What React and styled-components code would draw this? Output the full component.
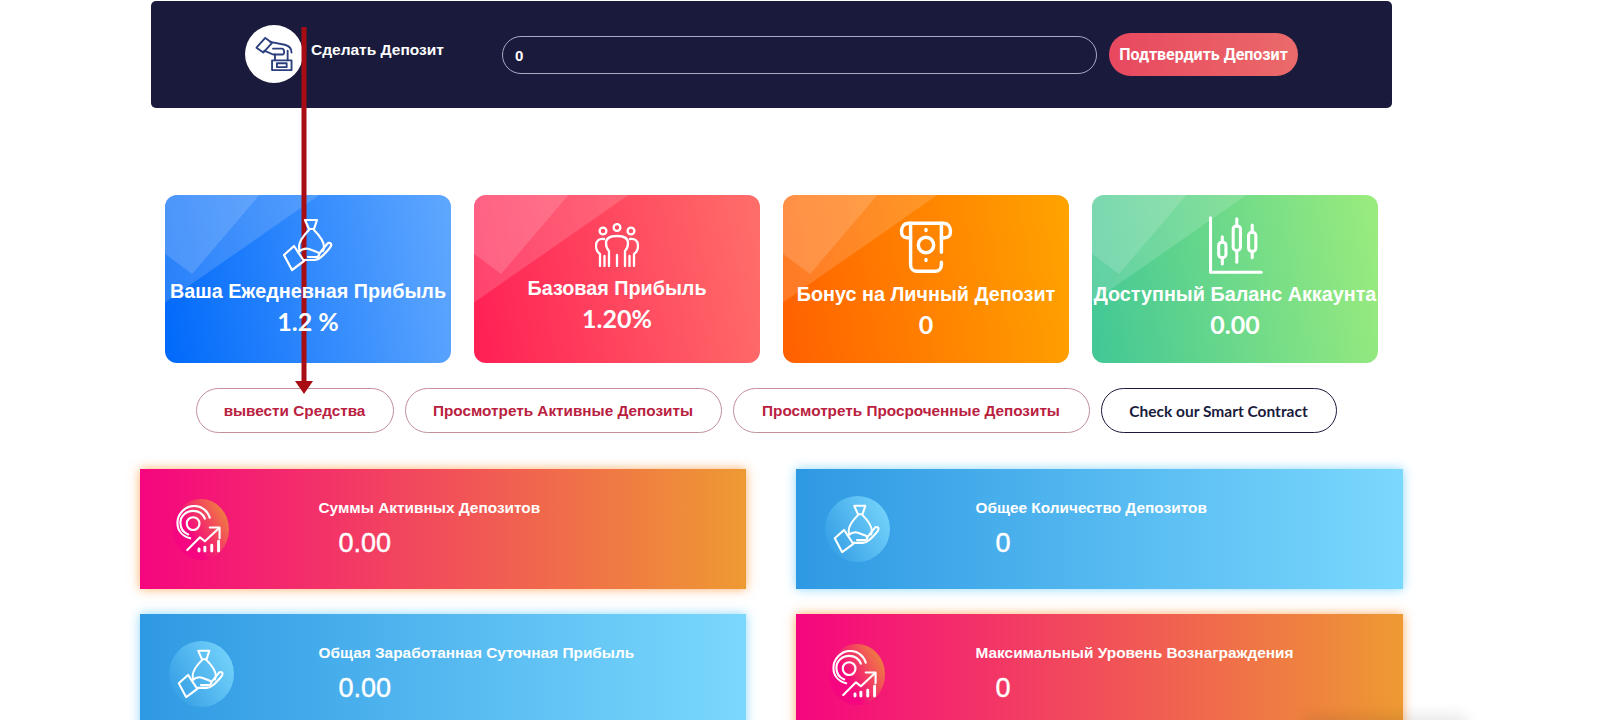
import React from 'react';
import styled, { createGlobalStyle } from 'styled-components';

const GlobalStyle = createGlobalStyle`
    html, body {
        margin: 0;
        padding: 0;
        background: #fff;
        overflow: hidden;
    }
`;

const HandBagIcon = ({ size }) => (
    <svg width={size} height={size} viewBox="-1 -1 52 54" fill="none" stroke="currentColor" strokeWidth="2.2" strokeLinejoin="round" strokeLinecap="round">
        <path d="M22 1h12l-3 9h-5z" />
        <path d="M26 11c-4 4-10 10-10 17 0 2 0 3 1 4M31 11c4 4 10 10 10 17 0 1 0 2-1 4" />
        <path d="M1 36l10-9 10 15-12 9z" />
        <path d="M15 33c4-3 8-4 11-3l8 3c3 1 3 5-1 5h-8" />
        <path d="M36 35l8-10c2-2 5-1 4 2-1 2-7 9-10 11-2 2-4 3-7 3H21" />
    </svg>
);

const PeopleIcon = ({ size }) => (
    <svg width={size} height={size} viewBox="0 0 44 44" fill="none" stroke="currentColor" strokeWidth="2.3" strokeLinecap="round" strokeLinejoin="round">
        <circle cx="8" cy="8" r="3.4" />
        <circle cx="22" cy="4.5" r="3.4" />
        <circle cx="36" cy="8" r="3.4" />
        <path d="M14 43V28c-2-2-3-4-3-8 0-5 5-7 11-7s11 2 11 7c0 4-1 6-3 8v15M22 32v11" />
        <path d="M9 16c-5-1-8 2-8 7 0 4 1 6 4 8v12M9.500 33v10" />
        <path d="M35 16c5-1 8 2 8 7 0 4-1 6-4 8v12M34.500 33v10" />
    </svg>
);

const BillIcon = ({ size }) => (
    <svg width={size} height={size} viewBox="0 0 64 64" fill="none" stroke="currentColor" strokeWidth="3.8" strokeLinecap="round" strokeLinejoin="round">
        <path d="M15 24h-4c-4 0-6-3-6-7s2-9 8-9h38c6 0 8 5 8 9s-2 7-6 7h-4" />
        <path d="M15 8v46c0 4 3 7 7 7h20c4 0 7-3 7-7v-3M49 8v32" />
        <circle cx="32" cy="32" r="8.500" />
        <path d="M32 15v1M32 48v1" />
    </svg>
);

const CandlesIcon = ({ size }) => (
    <svg width={size} height={size} viewBox="0 0 64 64" fill="none" stroke="currentColor" strokeWidth="3.4" strokeLinecap="round" strokeLinejoin="round">
        <path d="M5 2v60h56" />
        <path d="M18 23v6M18 46v7M34 3v8M34 38v13M51 10v8M51 39v7" />
        <rect x="14" y="29" width="8" height="17" rx="3.500" />
        <rect x="30" y="11" width="8" height="27" rx="3.500" />
        <rect x="47" y="18" width="8" height="21" rx="3.500" />
    </svg>
);

const TargetIcon = ({ size }) => (
    <svg width={size} height={size} viewBox="-1 -1 46 49" fill="none" stroke="currentColor" strokeWidth="2.2" strokeLinecap="round" strokeLinejoin="round">
        <path d="M13 33C5 31 0 25 0 17 0 8 8 0 17 0c8 0 14 5 16 12" />
        <path d="M11 29C6 27 3 23 3 17 3 10 9 5 16 5c6 0 10 3 12 8" />
        <circle cx="16" cy="18" r="6.500" />
        <path d="M10 45l13-13 5 4 14-13" />
        <path d="M33 22h10v11" />
        <path d="M22 46v-2M28 46v-4M35 46v-6M42 46v-10" strokeWidth="3" />
    </svg>
);

const DepositIcon = ({ size }) => (
    <svg width={size} height={size} viewBox="-1 -1 38 39" fill="none" stroke="#2b3f7e" strokeWidth="1.9" strokeLinejoin="round" strokeLinecap="round">
        <path d="M0 12l9-10 7 5-9 10z" />
        <path d="M14 6l15 3c4 1 7 4 7 8" />
        <path d="M8 15l9 4h10c2 0 2-6-1-6h-9" />
        <path d="M19 25v-6M32 25V15" />
        <rect x="16" y="25" width="20" height="10" />
        <rect x="21" y="28" width="10" height="4" />
    </svg>
);

const Page = styled.div`
    position: relative;
    box-sizing: border-box;
    width: 1543px;
    height: 720px;
    overflow: hidden;
    padding-top: 1px;
    display: flex;
    flex-direction: column;
    align-items: center;
    font-family: "Liberation Sans", Arial, sans-serif;
`;

const DepositBar = styled.div`
    box-sizing: border-box;
    width: 1241px;
    height: 107px;
    flex: none;
    display: flex;
    align-items: flex-start;
    padding: 24px 94px 0;
    background: #1a1b3c;
    border-radius: 5px;
`;

const DepositCircle = styled.div`
    width: 58px;
    height: 58px;
    flex: none;
    display: flex;
    align-items: center;
    justify-content: center;
    background: #fff;
    border-radius: 50%;
`;

const DepositTitle = styled.div`
    width: 191px;
    flex: none;
    margin: 16px 0 0 8px;
    color: #fff;
    font-size: 15.5px;
    font-weight: 700;
`;

const AmountInput = styled.input`
    box-sizing: border-box;
    width: 595px;
    height: 38px;
    flex: none;
    margin-top: 11px;
    padding: 0 12px;
    background: transparent;
    border: 1px solid #a9a9c4;
    border-radius: 19px;
    color: #fff;
    outline: none;
    font-family: "Liberation Sans", Arial, sans-serif;
    font-size: 15px;
    font-weight: 700;
`;

const ConfirmButton = styled.button`
    width: 189px;
    height: 43px;
    flex: none;
    margin: 8px 0 0 12px;
    padding: 0;
    background: linear-gradient(90deg, #e8485f, #ea6a6a);
    border: none;
    border-radius: 22px;
    color: #fff;
    font-family: Roboto, "Liberation Sans", sans-serif;
    font-size: 16px;
    font-weight: 700;
`;

const CardRow = styled.div`
    display: flex;
    gap: 23px;
    margin-top: 87px;
`;

const Card = styled.div`
    position: relative;
    box-sizing: border-box;
    width: 286px;
    height: 168px;
    overflow: hidden;
    display: flex;
    flex-direction: column;
    align-items: center;
    padding-top: ${(props) => props.$top}px;
    background: linear-gradient(80deg, ${(props) => props.$from}, ${(props) => props.$to});
    border-radius: 12px;
    color: #fff;

    &::before, &::after {
        content: "";
        position: absolute;
        inset: 0;
        background: rgba(255, 255, 255, 0.15);
    }

    &::before {
        clip-path: polygon(0 0, 54% 0, 0 64%);
    }

    &::after {
        clip-path: polygon(0 0, 33% 0, 9.5% 47%, 0 35%);
    }
`;

const CardIcon = styled.div`
    position: relative;
    z-index: 1;
    height: ${(props) => props.$height}px;
    display: flex;
    align-items: center;
    justify-content: center;
`;

const CardTitle = styled.div`
    position: relative;
    z-index: 1;
    margin-top: ${(props) => props.$gap}px;
    white-space: nowrap;
    font-size: 19.8px;
    font-weight: 700;
    line-height: 22px;
`;

const CardValue = styled.div`
    position: relative;
    z-index: 1;
    margin-top: 3px;
    font-family: Lato, "Liberation Sans", sans-serif;
    font-size: 25px;
    font-weight: 700;
    line-height: 32px;
`;

const ActionRow = styled.div`
    display: flex;
    gap: 11px;
    margin: 25px 11px 0 0;
`;

const ActionButton = styled.button`
    box-sizing: border-box;
    width: ${(props) => props.$width}px;
    height: 45px;
    padding: 0;
    background: #fff;
    border: 1px solid ${(props) => (props.$dark ? '#1a1b3c' : '#c4919b')};
    border-radius: 23px;
    color: ${(props) => (props.$dark ? '#1a1b3c' : '#b9213f')};
    font-family: ${(props) => (props.$dark ? 'Lato, sans-serif' : '"Liberation Sans", Arial, sans-serif')};
    font-size: ${(props) => (props.$dark ? 15.5 : 15.3)}px;
    font-weight: 700;
`;

const StatGrid = styled.div`
    display: grid;
    grid-template-columns: 606px 607px;
    column-gap: 50px;
    row-gap: 25px;
    margin: 36px 1px 0 0;
`;

const StatCard = styled.div`
    box-sizing: border-box;
    height: 120px;
    display: flex;
    align-items: flex-start;
    padding: 27px 0 0 29px;
    background: ${(props) => (props.$pink
        ? 'linear-gradient(90deg, #f5057f, #ee9a33)'
        : 'linear-gradient(90deg, #2e99e3, #7bd8fd)')};
    box-shadow: 0 0 10px ${(props) => (props.$pink ? 'rgba(255, 140, 40, 0.7)' : 'rgba(90, 200, 255, 0.7)')};
    color: #fff;
`;

const IconSlot = styled.div`
    box-sizing: border-box;
    width: ${(props) => (props.$right ? 151 : 150)}px;
    height: 66px;
    flex: none;
    display: flex;
    align-items: center;
    padding-left: ${(props) => (props.$pink ? 4 : 0)}px;
`;

const StatCircle = styled.div`
    box-sizing: border-box;
    width: ${(props) => (props.$pink ? 56 : 65)}px;
    height: ${(props) => (props.$pink ? 61 : 66)}px;
    flex: none;
    display: flex;
    align-items: center;
    justify-content: center;
    padding-right: ${(props) => (props.$pink ? 4 : 0)}px;
    background: ${(props) => (props.$pink
        ? 'linear-gradient(60deg, #f5057f 35%, #ee9a33)'
        : 'linear-gradient(60deg, #2e99e3, #7bd8fd)')};
    border-radius: 50%;
`;

const StatText = styled.div`
    margin-top: 2px;
`;

const StatTitle = styled.div`
    font-size: 15.4px;
    font-weight: 700;
    line-height: 20px;
`;

const StatValue = styled.div`
    margin: 9px 0 0 20px;
    font-size: 27px;
    font-weight: 400;
    line-height: 32px;
    -webkit-text-stroke: 0.4px #fff;
`;

const Arrow = styled.svg`
    position: absolute;
    left: 295px;
    top: 27px;
`;

const ChatShadow = styled.div`
    position: absolute;
    left: 1310px;
    top: 722px;
    width: 150px;
    height: 20px;
    background: #f2f2f2;
    box-shadow: 0 0 16px 6px rgba(0, 0, 0, 0.1);
`;

const cards = [
    { title: 'Ваша Ежедневная Прибыль', value: '1.2 %', from: '#0069fa', to: '#60a8ff', top: 24, iconHeight: 52, gap: 9, icon: <HandBagIcon size={54} /> },
    { title: 'Базовая Прибыль', value: '1.20%', from: '#ff1f54', to: '#ff6f6a', top: 28, iconHeight: 44, gap: 10, icon: <PeopleIcon size={44} /> },
    { title: 'Бонус на Личный Депозит', value: '0', from: '#ff6000', to: '#ffa400', top: 21, iconHeight: 58, gap: 9, icon: <BillIcon size={58} /> },
    { title: 'Доступный Баланс Аккаунта', value: '0.00', from: '#41c796', to: '#9bec7d', top: 21, iconHeight: 58, gap: 9, icon: <CandlesIcon size={58} /> }
];

const actions = [
    { label: 'вывести Средства', width: 198 },
    { label: 'Просмотреть Активные Депозиты', width: 317 },
    { label: 'Просмотреть Просроченные Депозиты', width: 357 },
    { label: 'Check our Smart Contract', width: 236, dark: true }
];

const stats = [
    { title: 'Суммы Активных Депозитов', value: '0.00', pink: true },
    { title: 'Общее Количество Депозитов', value: '0', pink: false, right: true },
    { title: 'Общая Заработанная Суточная Прибыль', value: '0.00', pink: false },
    { title: 'Максимальный Уровень Вознаграждения', value: '0', pink: true, right: true }
];

function App() {
    return (
        <Page>
            <GlobalStyle />
            <DepositBar>
                <DepositCircle>
                    <DepositIcon size={38} />
                </DepositCircle>
                <DepositTitle>Сделать Депозит</DepositTitle>
                <AmountInput type="text" defaultValue="0" />
                <ConfirmButton type="button">Подтвердить Депозит</ConfirmButton>
            </DepositBar>
            <CardRow>
                {cards.map((card) => (
                    <Card key={card.title} $from={card.from} $to={card.to} $top={card.top}>
                        <CardIcon $height={card.iconHeight}>{card.icon}</CardIcon>
                        <CardTitle $gap={card.gap}>{card.title}</CardTitle>
                        <CardValue>{card.value}</CardValue>
                    </Card>
                ))}
            </CardRow>
            <ActionRow>
                {actions.map((action) => (
                    <ActionButton key={action.label} type="button" $width={action.width} $dark={action.dark}>
                        {action.label}
                    </ActionButton>
                ))}
            </ActionRow>
            <StatGrid>
                {stats.map((stat) => (
                    <StatCard key={stat.title} $pink={stat.pink}>
                        <IconSlot $pink={stat.pink} $right={stat.right}>
                            <StatCircle $pink={stat.pink}>
                                {stat.pink ? <TargetIcon size={48} /> : <HandBagIcon size={50} />}
                            </StatCircle>
                        </IconSlot>
                        <StatText>
                            <StatTitle>{stat.title}</StatTitle>
                            <StatValue>{stat.value}</StatValue>
                        </StatText>
                    </StatCard>
                ))}
            </StatGrid>
            <Arrow width="18" height="368" viewBox="0 0 18 368">
                <rect x="6.5" y="0" width="5" height="356" fill="#a80d13" />
                <path d="M0 354h18l-9 13z" fill="#a80d13" />
            </Arrow>
            <ChatShadow />
        </Page>
    );
}

export default App;
